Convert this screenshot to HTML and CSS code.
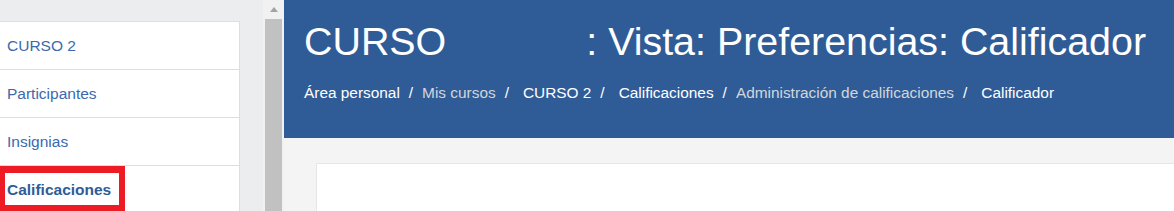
FILE: index.html
```html
<!DOCTYPE html>
<html lang="es">
<head>
<meta charset="utf-8">
<title>CURSO : Vista: Preferencias: Calificador</title>
<link rel="stylesheet" href="styles.css">
</head>
<body>
<div class="page">
  <aside class="drawer">
    <nav class="nav-list">
      <a class="nav-item" href="#">CURSO 2</a>
      <a class="nav-item" href="#">Participantes</a>
      <a class="nav-item" href="#">Insignias</a>
      <a class="nav-item active" href="#">Calificaciones</a>
    </nav>
    <div class="highlight"></div>
  </aside>
  <div class="scrollbar">
    <div class="scroll-arrow"><span class="tri"></span></div>
    <div class="scroll-thumb"></div>
  </div>
  <main class="main">
    <header class="page-header">
      <h1 class="title"><span class="title-name">CURSO</span><span class="title-rest">: Vista: Preferencias: Calificador</span></h1>
      <ol class="breadcrumb">
        <li class="crumb">Área personal</li>
        <li class="sep">/</li>
        <li class="crumb muted">Mis cursos</li>
        <li class="sep">/</li>
        <li class="crumb wide">CURSO 2</li>
        <li class="sep">/</li>
        <li class="crumb wide">Calificaciones</li>
        <li class="sep">/</li>
        <li class="crumb muted">Administración de calificaciones</li>
        <li class="sep">/</li>
        <li class="crumb wide">Calificador</li>
      </ol>
    </header>
    <section class="content">
      <div class="card"></div>
    </section>
  </main>
</div>
</body>
</html>
```
FILE: styles.css
```css
* { box-sizing: border-box; }
html, body { margin: 0; padding: 0; height: 100%; overflow: hidden; }
body {
  font-family: "Liberation Sans", Arial, sans-serif;
  background: #f4f4f4;
}
.page {
  display: flex;
  height: 211px;
}
.drawer {
  position: relative;
  width: 263px;
  flex: none;
  background: #ecedef;
  padding-top: 21px;
}
.nav-list {
  width: 240px;
  background: #fff;
  border-top: 1px solid #dcdee0;
  border-right: 1px solid #dcdee0;
  display: flex;
  flex-direction: column;
}
.nav-item {
  display: block;
  height: 48px;
  line-height: 47px;
  padding-left: 7px;
  font-size: 15.5px;
  color: #3a6aad;
  text-decoration: none;
  border-bottom: 1px solid #dcdee0;
}
.nav-item.active { font-weight: bold; color: #2f5c97; }
.highlight {
  position: absolute;
  left: 0;
  top: 166px;
  width: 125px;
  height: 45px;
  border: 6px solid #ed1c24;
  border-left-width: 5px;
  border-top-width: 7px;
}
.scrollbar {
  width: 21px;
  flex: none;
  background: #f1f1f1;
  padding: 0 2px;
  display: flex;
  flex-direction: column;
}
.scroll-arrow {
  height: 19px;
  display: flex;
  justify-content: center;
  padding-top: 7px;
}
.tri {
  width: 0;
  height: 0;
  border-left: 4px solid transparent;
  border-right: 4px solid transparent;
  border-bottom: 5px solid #a3a3a3;
}
.scroll-thumb {
  flex: 1;
  background: #c1c1c1;
}
.main {
  flex: 1;
  display: flex;
  flex-direction: column;
  background: #f4f4f4;
}
.page-header {
  height: 138px;
  flex: none;
  background: #2f5c97;
  padding: 18px 20px 0 20px;
  color: #fff;
}
.title {
  margin: 0;
  font-weight: normal;
  font-size: 39.4px;
  line-height: 46px;
  white-space: nowrap;
}
.title-rest { margin-left: 140px; }
.breadcrumb {
  list-style: none;
  margin: 18px 0 0 0;
  padding: 0;
  display: flex;
  font-size: 15.4px;
  line-height: 22px;
  white-space: nowrap;
}
.crumb { color: #fff; }
.crumb.muted { color: #d3d6db; }
.crumb.wide { margin-left: 5px; }
.sep { padding: 0 9px; color: #fff; }
.content {
  flex: 1;
  padding: 25px 0 0 32px;
}
.card {
  height: 100%;
  background: #fff;
  border: 1px solid #e6e6e6;
  border-right: none;
  border-bottom: none;
}
```
